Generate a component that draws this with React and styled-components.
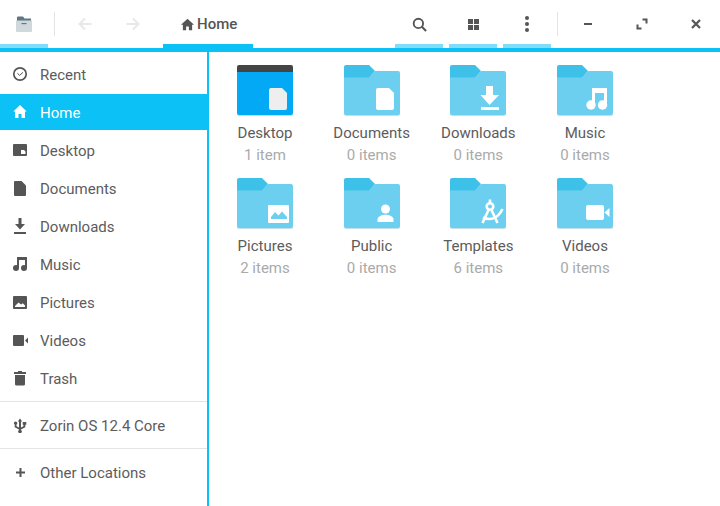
import React from 'react';
import styled, { createGlobalStyle } from 'styled-components';

const Global = createGlobalStyle`
  html, body { margin: 0; padding: 0; background: #fff; overflow: hidden; }
  body { font-family: Roboto, "Liberation Sans", sans-serif; color: #5c5c5c; }
`;

const Window = styled.div`
  width: 720px;
  height: 506px;
  display: flex;
  flex-direction: column;
  background: #fff;
`;

const Header = styled.header`
  height: 48px;
  flex: none;
  display: flex;
  gap: 6px;
  border-bottom: 4px solid #0bc1f5;
`;

const ToolButton = styled.div`
  width: 48px;
  height: 48px;
  box-sizing: border-box;
  display: flex;
  align-items: center;
  justify-content: center;
  color: ${p => (p.$disabled ? '#e8e8e8' : '#555')};
  box-shadow: ${p => (p.$tab ? 'inset 0 -4px 0 #7fdcfa' : 'none')};
`;

const NavGroup = styled.div`
  display: flex;
`;

const Separator = styled.div`
  width: 1px;
  height: 24px;
  margin-top: 12px;
  background: #e4e4e4;
`;

const PathTab = styled.div`
  width: 90px;
  height: 48px;
  padding-left: 18px;
  display: flex;
  align-items: center;
  gap: 3px;
  box-sizing: border-box;
  box-shadow: inset 0 -4px 0 #0bc1f5;
  color: #555;
  font-size: 15px;
  font-weight: 500;
`;

const Spacer = styled.div`
  flex: 1;
`;

const Body = styled.div`
  flex: 1;
  display: flex;
  min-height: 0;
`;

const Sidebar = styled.nav`
  width: 207px;
  flex: none;
  padding-top: 4px;
  border-right: 2px solid #0bc1f5;
`;

const Place = styled.div`
  height: 36px;
  margin-bottom: 2px;
  padding: 2px 0 0 12px;
  display: flex;
  align-items: center;
  gap: 12px;
  font-size: 15px;
  box-sizing: border-box;
  background: ${p => (p.$active ? '#0bc1f5' : 'transparent')};
  color: ${p => (p.$active ? '#fff' : '#5c5c5c')};
`;

const PlaceIcon = styled.svg`
  width: 16px;
  height: 16px;
  flex: none;
  margin-top: -2px;
  fill: currentColor;
  color: ${p => (p.$active ? '#fff' : '#555')};
`;

const Divider = styled.div`
  height: 1px;
  margin: 5px 0;
  background: #e4e4e4;
`;

const Files = styled.main`
  flex: 1;
  display: grid;
  grid-template-columns: repeat(4, 106.667px);
  grid-auto-rows: 113px;
  padding: 13px 0 0 2.667px;
`;

const FileItem = styled.div`
  display: flex;
  flex-direction: column;
  align-items: center;
`;

const FolderSvg = styled.svg`
  width: 56px;
  height: 51px;
  display: block;
`;

const FileName = styled.div`
  margin-top: 8px;
  font-size: 15px;
  line-height: 18px;
  color: #5c5c5c;
`;

const FileMeta = styled.div`
  margin-top: 4px;
  font-size: 15px;
  line-height: 18px;
  color: #aaa;
`;

const P = ({ d }) => <path d={d} />;

const placeGlyphs = {
  recent: (
    <>
      <circle cx="8" cy="8" r="6.200" fill="none" stroke="currentColor" strokeWidth="1.700" />
      <path d="M5.400 7.300 7.500 9.400 11 6.400" fill="none" stroke="currentColor" strokeWidth="1" />
    </>
  ),
  home: <P d="M8 1 1.300 7.500H3V14h3.500v-4h3v4H13V7.500h1.700z" />,
  desktop: <path fillRule="evenodd" d="M2 2h12a1 1 0 0 1 1 1v10a1 1 0 0 1-1 1H2a1 1 0 0 1-1-1V3a1 1 0 0 1 1-1zm7 6v4h4.500V9.500L12 8z" />,
  documents: <P d="M3 1h6.500L14 5.500V15a1 1 0 0 1-1 1H3a1 1 0 0 1-1-1V2a1 1 0 0 1 1-1z" />,
  downloads: <P d="M6.500 0h3v6H13l-5 5.500L3 6h3.500zM2 14h12v2H2z" />,
  music: (
    <>
      <path d="M5 1h10v11h-2V4H7v8H5z" />
      <circle cx="4" cy="12" r="3" />
      <circle cx="12" cy="12" r="3" />
    </>
  ),
  pictures: <path fillRule="evenodd" d="M2 2h12a1 1 0 0 1 1 1v11a1 1 0 0 1-1 1H2a1 1 0 0 1-1-1V3a1 1 0 0 1 1-1zm1 11h10v-1.500L10.800 9.300 9.200 10.500 6.500 8.500 3 12z" />,
  videos: <P d="M2 3h9a1 1 0 0 1 1 1v9a1 1 0 0 1-1 1H2a1 1 0 0 1-1-1V4a1 1 0 0 1 1-1zM13 8.500 16 5.500v6z" />,
  trash: <P d="M6 1h4v1h4v2H2V2h4zM3 5h10v9.500a1.500 1.500 0 0 1-1.500 1H4.500a1.500 1.500 0 0 1-1.500-1z" />,
  usb: <P d="M8 1.500 10.200 4.500H9V10.400l2.400-1.200V7.800H10.700V5h3.600v2.800h-1v2.500L9 12.600v.4a1.800 1.800 0 1 1-2 0v-.4L2.700 10.300V7.500a1.600 1.600 0 1 1 1.800 0v1.700L7 10.400V4.500H5.800z" />,
  plus: <P d="M7.500 4h2v3.500H13v2H9.500V13h-2V9.500H4v-2h3.500z" />,
};

const DOC = 'M34 23h11l5 5v15a2 2 0 0 1-2 2H34a2 2 0 0 1-2-2V25a2 2 0 0 1 2-2z';

const folderBadges = {
  doc: <path d={DOC} fill="#fff" />,
  download: <path d="M36 21h7v9h6l-9.500 10L30.500 30H36zM31 42h18v3H31z" fill="#fff" />,
  music: (
    <g fill="#fff">
      <path d="M35 23h15v17h-3V28H38v12h-3z" />
      <circle cx="34" cy="40" r="4.700" />
      <circle cx="45.500" cy="40" r="4.700" />
    </g>
  ),
  pictures: (
    <>
      <rect x="31" y="27" width="21" height="18" rx="1" fill="#fff" />
      <path d="M34 41v-2l4-5 3.500 3.500L45 33.500l5 5.500v2z" fill="#6dcff0" />
    </>
  ),
  person: (
    <>
      <circle cx="41.500" cy="31" r="4.500" fill="#fff" />
      <path d="M33.500 44v-2.500c0-3 4-4.800 8-4.800s8 1.800 8 4.800V44z" fill="#fff" />
    </>
  ),
  compass: (
    <g fill="none" stroke="#fff" strokeWidth="2.600">
      <path d="M40 21.500v3" />
      <circle cx="40" cy="28.500" r="3.300" />
      <path d="M38.500 32 32.500 45M41.500 32l6 13" />
      <path d="M33 39.500c7 3.500 15 1 19.500-8.500" />
    </g>
  ),
  video: (
    <>
      <rect x="29" y="27" width="18" height="15" rx="2" fill="#fff" />
      <path d="M47.500 34.500 52.500 30v9z" fill="#fff" />
    </>
  ),
};

const Folder = ({ badge }) => (
  <FolderSvg viewBox="0 0 56 51">
    <path d="M0 44h56v5a2 2 0 0 1-2 2H2a2 2 0 0 1-2-2z" fill="#c4dfe9" />
    <path d="M2 0h23l6 6-6 7H0V2a2 2 0 0 1 2-2z" fill="#3ec1e9" />
    <path d="M0 12.500h25L31 6h23a2 2 0 0 1 2 2v40a2 2 0 0 1-2 2H2a2 2 0 0 1-2-2z" fill="#6dcff0" />
    {folderBadges[badge]}
  </FolderSvg>
);

const DesktopFolder = () => (
  <FolderSvg viewBox="0 0 56 51">
    <path d="M0 44h56v5a2 2 0 0 1-2 2H2a2 2 0 0 1-2-2z" fill="#c4dfe9" />
    <path d="M0 6h56v42a2 2 0 0 1-2 2H2a2 2 0 0 1-2-2z" fill="#03a9f4" />
    <path d="M2 0h52a2 2 0 0 1 2 2v5H0V2a2 2 0 0 1 2-2z" fill="#444" />
    <path d={DOC} fill="#eee" />
  </FolderSvg>
);

const places = [
  ['recent', 'Recent'],
  ['home', 'Home', true],
  ['desktop', 'Desktop'],
  ['documents', 'Documents'],
  ['downloads', 'Downloads'],
  ['music', 'Music'],
  ['pictures', 'Pictures'],
  ['videos', 'Videos'],
  ['trash', 'Trash'],
];

const files = [
  ['desktop', 'Desktop', '1 item'],
  ['doc', 'Documents', '0 items'],
  ['download', 'Downloads', '0 items'],
  ['music', 'Music', '0 items'],
  ['pictures', 'Pictures', '2 items'],
  ['person', 'Public', '0 items'],
  ['compass', 'Templates', '6 items'],
  ['video', 'Videos', '0 items'],
];

const SidebarPlace = ({ icon, label, active }) => (
  <Place $active={active}>
    <PlaceIcon viewBox="0 0 16 16" $active={active}>{placeGlyphs[icon]}</PlaceIcon>
    {label}
  </Place>
);

const Glyph = ({ size = 16, children }) => (
  <svg width={size} height={size} viewBox="0 0 16 16" fill="currentColor">{children}</svg>
);

export default function App() {
  return (
    <Window>
      <Global />
      <Header>
        <ToolButton $tab>
          <svg width="16" height="16" viewBox="0 0 16 16">
            <path d="M1 1.500a1 1 0 0 1 1-1h5l1.500 2H15v3H1z" fill="#5f7683" />
            <path d="M0 4.500h16V15a1 1 0 0 1-1 1H1a1 1 0 0 1-1-1z" fill="#cfd8dc" />
            <rect x="5.500" y="7" width="5" height="1.200" fill="#5f7683" />
          </svg>
        </ToolButton>
        <Separator />
        <NavGroup>
          <ToolButton $disabled>
            <Glyph>
              <path d="M8 2.500 2.500 8 8 13.500M3 8h11.500" fill="none" stroke="currentColor" strokeWidth="2" />
            </Glyph>
          </ToolButton>
          <ToolButton $disabled>
            <Glyph>
              <path d="M8 2.500 13.500 8 8 13.500M13 8H1.500" fill="none" stroke="currentColor" strokeWidth="2" />
            </Glyph>
          </ToolButton>
        </NavGroup>
        <PathTab>
          <Glyph size={13}><path d="M8 .8 0 8.300h2.300V15h4v-4.500h3.400V15h4V8.300H16z" /></Glyph>
          Home
        </PathTab>
        <Spacer />
        <ToolButton $tab>
          <Glyph size={15}>
            <circle cx="6.800" cy="6.800" r="5" fill="none" stroke="currentColor" strokeWidth="2" />
            <path d="m10.500 10.500 4.500 4.500" fill="none" stroke="currentColor" strokeWidth="2.200" />
          </Glyph>
        </ToolButton>
        <ToolButton $tab>
          <svg width="11" height="11" viewBox="0 0 11 11" fill="currentColor">
            <path d="M0 0h5v5H0zM6 0h5v5H6zM0 6h5v5H0zM6 6h5v5H6z" />
          </svg>
        </ToolButton>
        <ToolButton $tab>
          <svg width="6" height="18" viewBox="0 0 6 18" fill="currentColor">
            <circle cx="3" cy="3" r="2" />
            <circle cx="3" cy="9" r="2" />
            <circle cx="3" cy="15" r="2" />
          </svg>
        </ToolButton>
        <Separator />
        <ToolButton>
          <Glyph><rect x="4" y="7" width="8" height="2" /></Glyph>
        </ToolButton>
        <ToolButton>
          <Glyph>
            <path d="M8.500 3.500H12.500V7.500M7.500 12.500H3.500V8.500" fill="none" stroke="currentColor" strokeWidth="2" />
          </Glyph>
        </ToolButton>
        <ToolButton>
          <Glyph>
            <path d="m4 4 8 8M12 4l-8 8" fill="none" stroke="currentColor" strokeWidth="2.200" />
          </Glyph>
        </ToolButton>
      </Header>
      <Body>
        <Sidebar>
          {places.map(([icon, label, active]) => (
            <SidebarPlace key={label} icon={icon} label={label} active={active} />
          ))}
          <Divider />
          <SidebarPlace icon="usb" label="Zorin OS 12.4 Core" />
          <Divider />
          <SidebarPlace icon="plus" label="Other Locations" />
        </Sidebar>
        <Files>
          {files.map(([badge, name, meta]) => (
            <FileItem key={name}>
              {badge === 'desktop' ? <DesktopFolder /> : <Folder badge={badge} />}
              <FileName>{name}</FileName>
              <FileMeta>{meta}</FileMeta>
            </FileItem>
          ))}
        </Files>
      </Body>
    </Window>
  );
}
